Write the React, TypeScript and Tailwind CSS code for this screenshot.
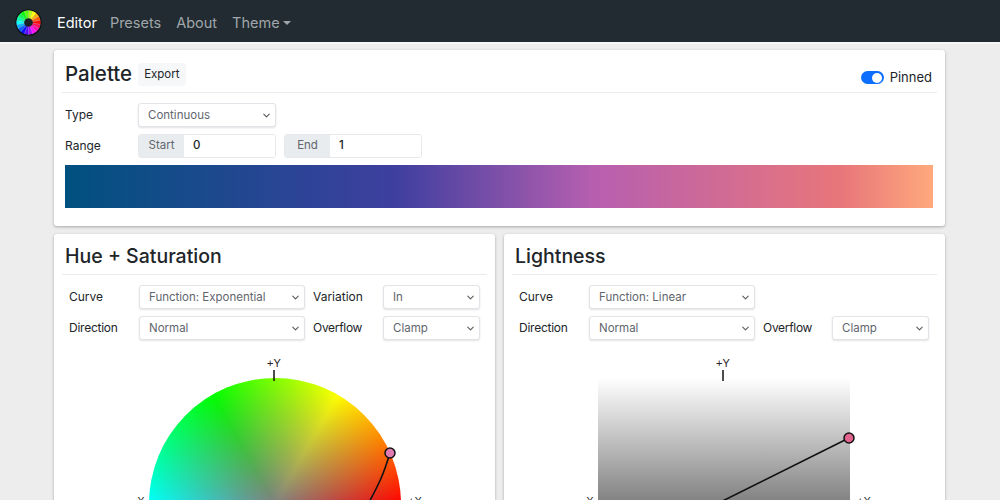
import { ChevronDown } from "lucide-react"

const ink = "text-[#212529]"

function Select({ value, className }: { value: string; className: string }) {
  return (
    <div className={`relative h-[24px] ${className}`}>
      <select
        defaultValue={value}
        className="h-full w-full appearance-none rounded-[3px] border border-[#e1e4e8] bg-white pl-[9px] pt-[1px] text-[11.5px] text-[#5f666d] shadow-[0_1px_2px_rgba(0,0,0,0.12)] outline-none"
      >
        <option>{value}</option>
      </select>
      <ChevronDown size={11} strokeWidth={2.2} className="pointer-events-none absolute right-[4px] top-[7px] text-[#555]" />
    </div>
  )
}

function RangeInput({ label, value }: { label: string; value: string }) {
  return (
    <div className="flex h-[24px] w-[138px] overflow-hidden rounded-[3px] border border-[#e6e8eb]">
      <span className="flex w-[45px] items-center justify-center bg-[#e9ecef] text-[11.5px] text-[#5f666d]">{label}</span>
      <span className={`flex flex-1 items-center bg-white pl-[9px] text-[11.5px] font-medium ${ink}`}>{value}</span>
    </div>
  )
}

function Controls({ curve, extra }: { curve: string; extra: boolean }) {
  return (
    <div className={`flex flex-col gap-[7px] pl-[15px] pt-[10px] text-[12px] ${ink}`}>
      <div className="flex items-center">
        <span className="w-[70px]">Curve</span>
        <Select value={curve} className="w-[166px]" />
        {extra && (
          <>
            <span className="ml-[8px] w-[70px]">Variation</span>
            <Select value="In" className="w-[97px]" />
          </>
        )}
      </div>
      <div className="flex items-center">
        <span className="w-[70px] tracking-[-0.25px]">Direction</span>
        <Select value="Normal" className="w-[166px]" />
        <span className={`ml-[8px] tracking-[-0.3px] ${extra ? "w-[70px]" : "w-[69px]"}`}>Overflow</span>
        <Select value="Clamp" className="w-[97px]" />
      </div>
    </div>
  )
}

function Plot({ wheel }: { wheel: boolean }) {
  return (
    <div className={`mt-[15px] flex justify-center ${wheel ? "" : "pr-[1px]"}`}>
      <div className="relative h-[300px] w-[310px]">
        {wheel ? (
          <div className="absolute left-[29px] top-[23px] h-[252px] w-[252px] rounded-full bg-[radial-gradient(circle,#808080_0%,rgba(128,128,128,0)_70.7%),conic-gradient(from_90deg,#ff0000,#ff00ff,#0000ff,#00ffff,#00ff00,#ffff00,#ff0000)]" />
        ) : (
          <div className="absolute left-[29px] top-[23px] h-[252px] w-[252px] bg-[linear-gradient(180deg,#ffffff,#000000)]" />
        )}
        <svg viewBox="0 0 310 300" className="absolute inset-0 h-full w-full" fontFamily="'Liberation Sans', sans-serif" fontSize="11" fill="#222">
          <text x="154" y="12" textAnchor="middle">+Y</text>
          <line x1="154" y1="15" x2="154" y2="26" stroke="#111" strokeWidth="1.5" />
          <text x="19" y="150" textAnchor="middle">-X</text>
          <text x="295" y="150" textAnchor="middle">+X</text>
          {wheel ? (
            <>
              <path d="M270 98 C264 118 260 128 242 160" fill="none" stroke="#111" strokeWidth="1.6" />
              <circle cx="270" cy="98" r="5" fill="#e07ab0" stroke="#111" strokeWidth="1.5" />
            </>
          ) : (
            <>
              <line x1="280" y1="83" x2="29" y2="208" stroke="#111" strokeWidth="1.6" />
              <circle cx="280" cy="83" r="5" fill="#e0648c" stroke="#111" strokeWidth="1.5" />
            </>
          )}
        </svg>
      </div>
    </div>
  )
}

export default function App() {
  return (
    <div className="h-[500px] overflow-hidden bg-[#ededed] font-['Inter',sans-serif]">
      <nav className="flex h-[42px] items-center bg-[#212b31] pl-[15px] pt-[3px] text-[14.5px] shadow-[0_2px_0_#f6f6f6]">
        <svg viewBox="0 0 28 28" className="mr-[15px] h-[27px] w-[27px]">
          {Array.from({ length: 18 }).map((_, i) => {
            const a0 = ((i * 20 - 90) * Math.PI) / 180
            const a1 = (((i + 1) * 20 - 90) * Math.PI) / 180
            const d = `M14 14 L${14 + 13 * Math.cos(a0)} ${14 + 13 * Math.sin(a0)} A13 13 0 0 1 ${14 + 13 * Math.cos(a1)} ${14 + 13 * Math.sin(a1)} Z`
            return <path key={i} d={d} fill={`hsl(${80 - i * 20}, 100%, 52%)`} stroke="#ffffff66" strokeWidth="0.5" />
          })}
          <circle cx="14" cy="14" r="13.2" fill="none" stroke="#0c0f11" strokeWidth="1.2" />
          <circle cx="14" cy="14" r="4.5" fill="#1b2226" />
        </svg>
        <span className="text-white">Editor</span>
        <span className="ml-[13px] text-[#a0a6aa]">Presets</span>
        <span className="ml-[15px] text-[#a0a6aa]">About</span>
        <span className="ml-[15px] flex items-center text-[#a0a6aa]">
          Theme
          <span className="ml-[3px] h-0 w-0 border-x-[4px] border-t-[4px] border-x-transparent border-t-[#a0a6aa]" />
        </span>
      </nav>

      <main className="ml-[54px] w-[891px] pt-[8px]">
        <section className="h-[176px] rounded-[3px] bg-white px-[8px] shadow-[0_1px_3px_rgba(0,0,0,0.3)]">
          <header className="flex h-[43px] items-center border-b border-[#e8ecef] pl-[3px] pr-[5px] pt-[7px]">
            <h1 className={`text-[20.5px] font-medium ${ink}`}>Palette</h1>
            <button className={`ml-[6px] h-[23px] rounded-[3px] bg-[#f6f7f8] px-[6px] text-[11.5px] ${ink}`}>Export</button>
            <div className={`ml-auto flex items-center gap-[6px] pt-[6px] text-[13px] ${ink}`}>
              <span className="flex h-[13px] w-[23px] items-center justify-end rounded-full bg-[#0d6efd] pr-[1.5px]">
                <span className="h-[10px] w-[10px] rounded-full bg-white" />
              </span>
              Pinned
            </div>
          </header>
          <div className={`flex flex-col gap-[7px] px-[3px] pt-[10px] text-[12px] ${ink}`}>
            <div className="flex items-center">
              <span className="w-[73px]">Type</span>
              <Select value="Continuous" className="w-[138px]" />
            </div>
            <div className="flex items-center">
              <span className="w-[73px]">Range</span>
              <RangeInput label="Start" value="0" />
              <div className="ml-[8px]">
                <RangeInput label="End" value="1" />
              </div>
            </div>
            <div className="h-[43px] w-[868px] bg-[linear-gradient(90deg,#00517f_0%,#3e3f9f_38%,#b75fb0_61%,#e8767a_89.5%,#ffa97c_100%)]" />
          </div>
        </section>

        <div className="mt-[8px] flex gap-[9px]">
          <section className="h-[400px] w-[441px] rounded-[3px] bg-white shadow-[0_1px_3px_rgba(0,0,0,0.3)]">
            <div className="mx-[8px] flex h-[41px] items-center border-b border-[#e8ecef] pl-[3px] pt-[6px]">
              <h2 className={`text-[19.5px] font-medium ${ink}`}>Hue + Saturation</h2>
            </div>
            <Controls curve="Function: Exponential" extra />
            <Plot wheel />
          </section>
          <section className="h-[400px] w-[441px] rounded-[3px] bg-white shadow-[0_1px_3px_rgba(0,0,0,0.3)]">
            <div className="mx-[8px] flex h-[41px] items-center border-b border-[#e8ecef] pl-[3px] pt-[6px]">
              <h2 className={`text-[19.5px] font-medium ${ink}`}>Lightness</h2>
            </div>
            <Controls curve="Function: Linear" extra={false} />
            <Plot wheel={false} />
          </section>
        </div>
      </main>
    </div>
  )
}
